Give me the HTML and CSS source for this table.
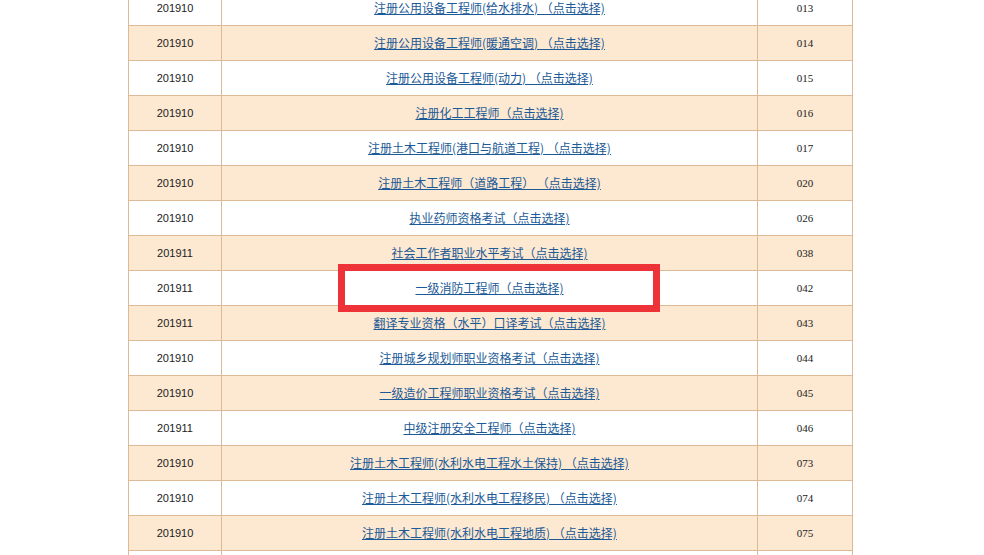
FILE: index.html
```html
<!DOCTYPE html>
<html lang="zh">
<head>
<meta charset="utf-8">
<link rel="stylesheet" href="styles.css">
</head>
<body>
<div class="wrap">
  <table class="exam">
    <tbody>
      <tr><td class="c1">201910</td><td class="c2"><a href="#">注册公用设备工程师(给水排水) （点击选择)</a></td><td class="c3">013</td></tr>
      <tr class="alt"><td class="c1">201910</td><td class="c2"><a href="#">注册公用设备工程师(暖通空调) （点击选择)</a></td><td class="c3">014</td></tr>
      <tr><td class="c1">201910</td><td class="c2"><a href="#">注册公用设备工程师(动力) （点击选择)</a></td><td class="c3">015</td></tr>
      <tr class="alt"><td class="c1">201910</td><td class="c2"><a href="#">注册化工工程师（点击选择)</a></td><td class="c3">016</td></tr>
      <tr><td class="c1">201910</td><td class="c2"><a href="#">注册土木工程师(港口与航道工程) （点击选择)</a></td><td class="c3">017</td></tr>
      <tr class="alt"><td class="c1">201910</td><td class="c2"><a href="#">注册土木工程师（道路工程） （点击选择)</a></td><td class="c3">020</td></tr>
      <tr><td class="c1">201910</td><td class="c2"><a href="#">执业药师资格考试（点击选择)</a></td><td class="c3">026</td></tr>
      <tr class="alt"><td class="c1">201911</td><td class="c2"><a href="#">社会工作者职业水平考试（点击选择)</a></td><td class="c3">038</td></tr>
      <tr><td class="c1">201911</td><td class="c2"><a href="#">一级消防工程师（点击选择)</a></td><td class="c3">042</td></tr>
      <tr class="alt"><td class="c1">201911</td><td class="c2"><a href="#">翻译专业资格（水平）口译考试（点击选择)</a></td><td class="c3">043</td></tr>
      <tr><td class="c1">201910</td><td class="c2"><a href="#">注册城乡规划师职业资格考试（点击选择)</a></td><td class="c3">044</td></tr>
      <tr class="alt"><td class="c1">201910</td><td class="c2"><a href="#">一级造价工程师职业资格考试（点击选择)</a></td><td class="c3">045</td></tr>
      <tr><td class="c1">201911</td><td class="c2"><a href="#">中级注册安全工程师（点击选择)</a></td><td class="c3">046</td></tr>
      <tr class="alt"><td class="c1">201910</td><td class="c2"><a href="#">注册土木工程师(水利水电工程水土保持) （点击选择)</a></td><td class="c3">073</td></tr>
      <tr><td class="c1">201910</td><td class="c2"><a href="#">注册土木工程师(水利水电工程移民) （点击选择)</a></td><td class="c3">074</td></tr>
      <tr class="alt"><td class="c1">201910</td><td class="c2"><a href="#">注册土木工程师(水利水电工程地质) （点击选择)</a></td><td class="c3">075</td></tr>
      <tr><td class="c1"></td><td class="c2"></td><td class="c3"></td></tr>
    </tbody>
  </table>
  <div class="highlight"></div>
</div>
</body>
</html>
```
FILE: styles.css
```css
html, body {
  margin: 0;
  padding: 0;
  background: #ffffff;
  overflow: hidden;
}

.wrap {
  position: relative;
  margin-left: 128px;
  margin-top: -10px;
  width: 724px;
}

.exam {
  border-collapse: collapse;
  width: 724px;
  table-layout: fixed;
}

.exam td {
  border: 1px solid #dcb997;
  height: 35px;
  padding: 0 0 1px 0;
  text-align: center;
  vertical-align: middle;
  box-sizing: border-box;
}

.exam tr.alt td {
  background: #fde8d1;
}

.c1 {
  width: 93px;
  font-family: "Liberation Sans", Arial, sans-serif;
  font-size: 11px;
  color: #222222;
}

.c2 {
  width: 536px;
  font-family: "Noto Sans CJK SC", sans-serif;
  font-size: 12px;
}

.c2 a {
  color: #1b5a96;
  text-decoration: underline;
}

.c3 {
  width: 95px;
  font-family: "Liberation Serif", serif;
  font-size: 11px;
  color: #222222;
}

.highlight {
  position: absolute;
  left: 210px;
  top: 274px;
  width: 322px;
  height: 48px;
  box-sizing: border-box;
  border: 7px solid #ee3338;
  pointer-events: none;
}
```
